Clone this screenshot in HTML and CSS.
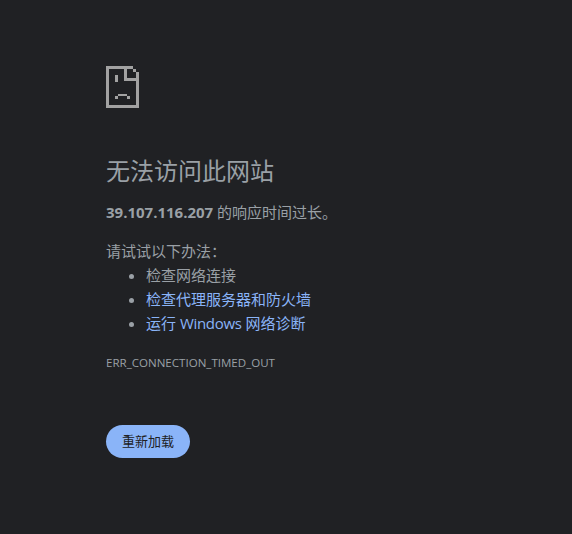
FILE: index.html

```html
<!DOCTYPE html>
<html lang="zh-CN">
<head>
    <meta charset="UTF-8">
    <meta name="viewport" content="width=device-width, initial-scale=1.0">
    <title>无法访问此网站</title>
    <link rel="stylesheet" href="styles.css">
</head>
<body>
    <div class="main-content">
        <svg class="icon" width="33" height="42" viewBox="0 0 33 42" shape-rendering="crispEdges">
            <path fill="#a2a2a2" d="M0 0H27V3H30V6H33V42H0ZM3 3V39H30V15H18V3ZM21 3V12H30V6H27V3Z"/>
            <path fill="#a2a2a2" d="M9 9H12V16H9ZM12 28H21V30H24V33H21V30H12V33H9V30H12Z"/>
        </svg>
        <h1 class="title">无法访问此网站</h1>
        <p class="summary"><strong>39.107.116.207</strong> 的响应时间过长。</p>
        <p class="try">请试试以下办法：</p>
        <ul class="suggestions">
            <li>检查网络连接</li>
            <li><a href="#">检查代理服务器和防火墙</a></li>
            <li><a href="#">运行 <span class="win">Windows</span> 网络诊断</a></li>
        </ul>
        <div class="error-code">ERR_CONNECTION_TIMED_OUT</div>
        <button class="btn" type="button">重新加载</button>
    </div>
</body>
</html>
```

FILE: styles.css

```css
body {
    margin: 0;
    height: 534px;
    overflow: hidden;
    background-color: #202124;
    color: #9aa0a6;
    font-family: 'Open Sans', 'Noto Sans CJK SC', sans-serif;
    font-size: 15px;
}

.main-content {
    display: flex;
    flex-direction: column;
    align-items: flex-start;
    padding: 66px 0 0 106px;
}

.icon {
    display: block;
    margin-bottom: 45px;
}

.title {
    margin: 0 0 11px;
    font-size: 24px;
    line-height: 36px;
    font-weight: 400;
}

.summary, .try {
    margin: 0;
    line-height: 24px;
}

.summary strong {
    font-weight: 700;
}

.try {
    margin-top: 15px;
}

.suggestions {
    margin: 0;
    padding-left: 40px;
}

.suggestions li {
    line-height: 24px;
}

.suggestions li::marker {
    color: #9aa0a6;
}

.suggestions a {
    color: #8ab4f8;
    text-decoration: none;
}

.win {
    letter-spacing: -0.3px;
}

.error-code {
    margin-top: 19px;
    font-size: 11.55px;
    line-height: 18px;
}

.btn {
    margin-top: 53px;
    width: 84px;
    height: 33px;
    padding: 0 0 2px;
    border: none;
    border-radius: 17px;
    background-color: #8ab4f8;
    color: #202124;
    font-family: inherit;
    font-size: 13px;
}
```
